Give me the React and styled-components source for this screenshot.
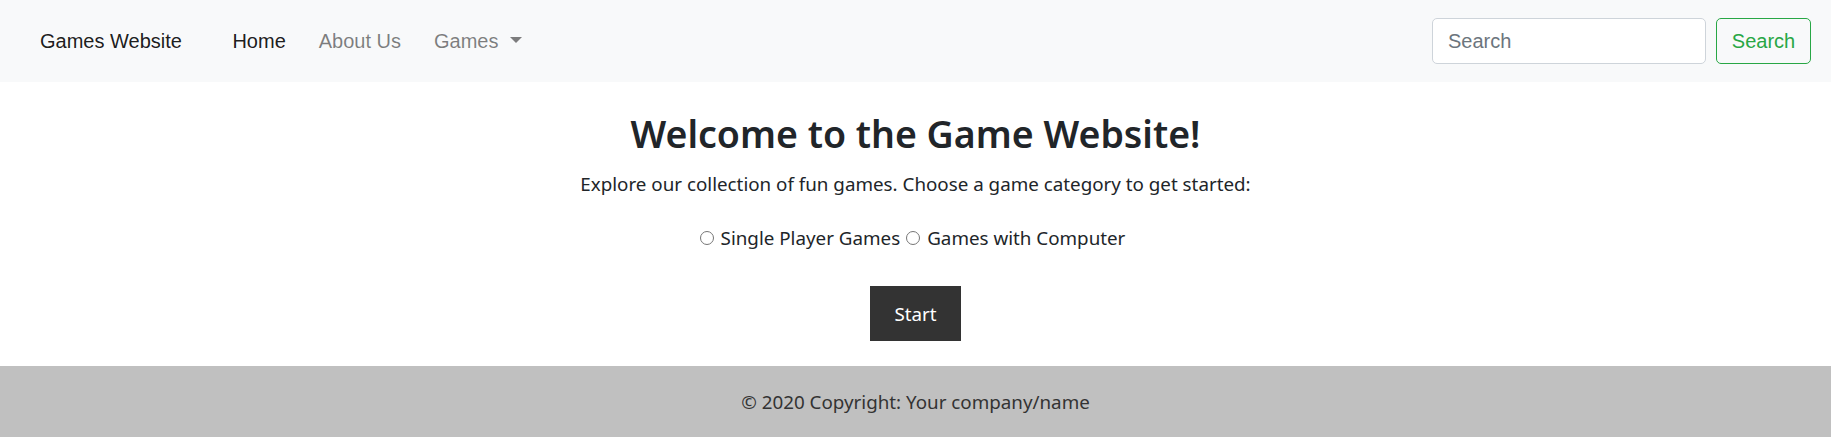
import * as React from "react"
import styled, { createGlobalStyle } from "styled-components"

const GlobalStyle = createGlobalStyle`
    html, body {
        margin: 0;
        padding: 0;
        background: #ffffff;
    }
    body {
        font-family: "Noto Sans", "Open Sans", sans-serif;
        color: #212529;
    }
`

const Page = styled.div`
    margin-right: 4px;
`

const Navbar = styled.nav`
    display: flex;
    align-items: center;
    height: 82px;
    padding: 0 20px 0 40px;
    background-color: #f8f9fa;
    font-family: "Liberation Sans", Arial, sans-serif;
    font-size: 20px;
`

const Brand = styled.a`
    color: rgba(0, 0, 0, 0.9);
    text-decoration: none;
    line-height: 30px;
    margin-right: 34px;
`

const NavList = styled.ul`
    display: flex;
    list-style: none;
    margin: 0;
    padding: 0;
`

const NavLink = styled.a`
    display: flex;
    align-items: center;
    padding: 0 16.5px;
    line-height: 30px;
    text-decoration: none;
    color: ${(p) => (p.$active ? "rgba(0, 0, 0, 0.9)" : "rgba(0, 0, 0, 0.5)")};
`

const Caret = styled.span`
    display: inline-block;
    width: 0;
    height: 0;
    margin-left: 11px;
    margin-top: -3px;
    border-top: 6px solid currentColor;
    border-left: 6px solid transparent;
    border-right: 6px solid transparent;
`

const SearchForm = styled.form`
    display: flex;
    gap: 10px;
    margin-left: auto;
`

const SearchInput = styled.input`
    box-sizing: border-box;
    width: 274px;
    height: 46px;
    padding: 0 15px;
    border: 1px solid #ced4da;
    border-radius: 5px;
    background: #ffffff;
    font-family: "Liberation Sans", Arial, sans-serif;
    font-size: 20px;
    color: #495057;
    &::placeholder {
        color: #6c757d;
    }
`

const OutlineButton = styled.button`
    box-sizing: border-box;
    height: 46px;
    width: 95px;
    padding: 0;
    border: 1px solid #28a745;
    border-radius: 5px;
    background: transparent;
    color: #28a745;
    font-family: "Liberation Sans", Arial, sans-serif;
    font-size: 20px;
`

const Main = styled.main`
    display: flex;
    flex-direction: column;
    align-items: center;
    text-align: center;
    padding: 29px 0 25px;
`

const Title = styled.h1`
    margin: 0;
    font-size: 37.5px;
    font-weight: 600;
    line-height: 1.2;
`

const Lead = styled.p`
    margin: 13px 0 0;
    font-size: 18.8px;
    line-height: 30px;
`

const Choices = styled.div`
    display: flex;
    align-items: center;
    margin-top: 24px;
    font-size: 18.8px;
    line-height: 30px;
`

const Choice = styled.label`
    display: flex;
    align-items: center;
    margin-right: 6px;
`

const Radio = styled.input`
    width: 14px;
    height: 14px;
    margin: 0 7px 0 0;
    accent-color: #767676;
`

const StartButton = styled.button`
    margin-top: 33px;
    width: 91px;
    height: 55px;
    border: none;
    border-radius: 0;
    background-color: #333333;
    color: #ffffff;
    font-family: "Noto Sans", "Open Sans", sans-serif;
    font-size: 18.8px;
`

const Footer = styled.footer`
    display: flex;
    align-items: center;
    justify-content: center;
    height: 71px;
    background-color: #c0c0c0;
    color: #333333;
    font-size: 18.8px;
`

const App = () => {
    return (
        <Page>
            <GlobalStyle />
            <Navbar>
                <Brand href="#">Games Website</Brand>
                <NavList>
                    <li>
                        <NavLink href="#" $active>Home</NavLink>
                    </li>
                    <li>
                        <NavLink href="#">About Us</NavLink>
                    </li>
                    <li>
                        <NavLink href="#">
                            Games
                            <Caret />
                        </NavLink>
                    </li>
                </NavList>
                <SearchForm onSubmit={(e) => e.preventDefault()}>
                    <SearchInput type="search" placeholder="Search" aria-label="Search" />
                    <OutlineButton type="submit">Search</OutlineButton>
                </SearchForm>
            </Navbar>
            <Main>
                <Title>Welcome to the Game Website!</Title>
                <Lead>Explore our collection of fun games. Choose a game category to get started:</Lead>
                <Choices>
                    <Choice>
                        <Radio type="radio" name="category" value="single" />
                        Single Player Games
                    </Choice>
                    <Choice>
                        <Radio type="radio" name="category" value="computer" />
                        Games with Computer
                    </Choice>
                </Choices>
                <StartButton type="button">Start</StartButton>
            </Main>
            <Footer>© 2020 Copyright: Your company/name</Footer>
        </Page>
    )
}

export default App
